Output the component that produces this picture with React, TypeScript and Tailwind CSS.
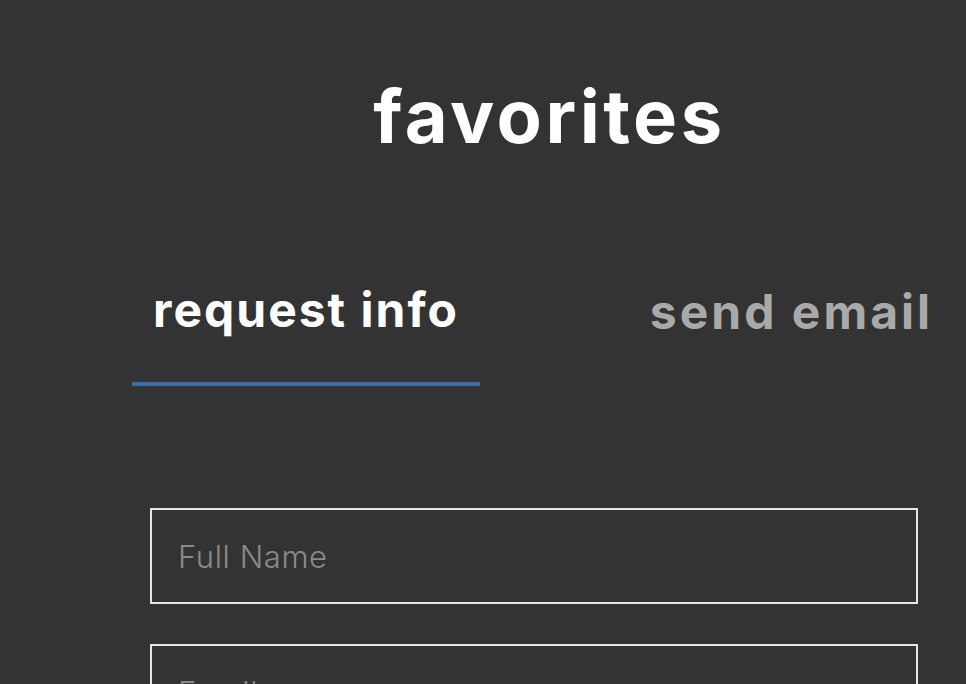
export default function App() {
  return (
    <div className="min-h-screen w-full overflow-hidden bg-[#333333] font-['Inter',sans-serif]">
      <div className="ml-[132px] w-[832px]">
        <h1 className="pl-[3px] pt-[79px] text-center text-[74px] font-bold leading-none tracking-[3.5px] text-white">
          favorites
        </h1>

        <div className="mt-[133px] flex justify-between">
          <button className="w-[348px] text-center">
            <span className="block pb-[48px] text-[48px] font-bold leading-none tracking-[2px] text-white">
              request info
            </span>
            <span className="block h-[4px] w-full bg-[#3d6aa8]" />
          </button>
          <button className="w-[348px] text-center">
            <span className="block pb-[48px] pl-[3px] text-[48px] font-bold leading-none tracking-[3px] text-[#a9a9a9]">
              send email
            </span>
          </button>
        </div>

        <form className="ml-[18px] mt-[122px] flex w-[768px] flex-col gap-[40px]">
          <input
            type="text"
            placeholder="Full Name"
            className="h-[96px] w-full border-2 border-[#e6e6e6] bg-transparent px-[26px] text-[31px] font-light tracking-[0.6px] text-white outline-none placeholder:text-[#8a8a8a]"
          />
          <input
            type="email"
            placeholder="Email"
            className="h-[96px] w-full border-2 border-[#e6e6e6] bg-transparent px-[26px] text-[31px] font-light tracking-[0.6px] text-white outline-none placeholder:text-[#8a8a8a]"
          />
        </form>
      </div>
    </div>
  );
}
